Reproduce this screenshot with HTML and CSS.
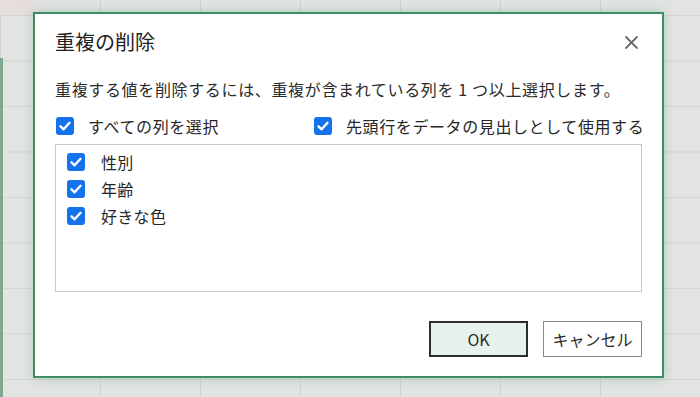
FILE: index.html
```html
<!DOCTYPE html>
<html lang="ja">
<head>
<meta charset="utf-8">
<title>重複の削除</title>
<link rel="stylesheet" href="styles.css">
</head>
<body>
<div class="sheet">
  <div class="corner"></div>
  <div class="selcol"></div>
  <div class="dialog">
    <div class="titlebar">
      <h1 class="title">重複の削除</h1>
      <button class="close" aria-label="閉じる">
        <svg width="13" height="13" viewBox="0 0 13 13"><path d="M1 1L12 12M12 1L1 12" stroke="#6b6b6b" stroke-width="1.8" stroke-linecap="round"/></svg>
      </button>
    </div>
    <p class="desc">重複する値を削除するには、重複が含まれている列を 1 つ以上選択します。</p>
    <div class="options">
      <label class="opt"><span class="cb"><svg viewBox="0 0 18 18"><path d="M4.5 9.3L7.6 12.3L13.5 5.8" fill="none" stroke="#fff" stroke-width="2.4" stroke-linecap="round" stroke-linejoin="round"/></svg></span>すべての列を選択</label>
      <label class="opt"><span class="cb"><svg viewBox="0 0 18 18"><path d="M4.5 9.3L7.6 12.3L13.5 5.8" fill="none" stroke="#fff" stroke-width="2.4" stroke-linecap="round" stroke-linejoin="round"/></svg></span>先頭行をデータの見出しとして使用する</label>
    </div>
    <div class="list">
      <label class="item"><span class="cb"><svg viewBox="0 0 18 18"><path d="M4.5 9.3L7.6 12.3L13.5 5.8" fill="none" stroke="#fff" stroke-width="2.4" stroke-linecap="round" stroke-linejoin="round"/></svg></span>性別</label>
      <label class="item"><span class="cb"><svg viewBox="0 0 18 18"><path d="M4.5 9.3L7.6 12.3L13.5 5.8" fill="none" stroke="#fff" stroke-width="2.4" stroke-linecap="round" stroke-linejoin="round"/></svg></span>年齢</label>
      <label class="item"><span class="cb"><svg viewBox="0 0 18 18"><path d="M4.5 9.3L7.6 12.3L13.5 5.8" fill="none" stroke="#fff" stroke-width="2.4" stroke-linecap="round" stroke-linejoin="round"/></svg></span>好きな色</label>
    </div>
    <div class="actions">
      <button class="btn primary">OK</button>
      <button class="btn">キャンセル</button>
    </div>
  </div>
</div>
</body>
</html>
```
FILE: styles.css
```css
* { box-sizing: border-box; }
html, body { margin: 0; padding: 0; }
body {
  width: 700px;
  height: 397px;
  overflow: hidden;
  font-family: "Noto Sans CJK JP", "Noto Sans", sans-serif;
  color: #262626;
}
.sheet {
  position: relative;
  width: 700px;
  height: 397px;
  background-color: #e2e4e2;
  background-image:
    linear-gradient(to right, #d3d5d3 1px, transparent 1px),
    linear-gradient(to bottom, #d3d5d3 1px, transparent 1px);
  background-size: 100px 100%, 100% 45.5px;
  background-position: 0 0, 0 15px;
}
.corner {
  position: absolute;
  left: 0; top: 0;
  width: 34px; height: 15px;
  background: #e6dedb;
}
.selcol {
  position: absolute;
  left: 0; top: 58px;
  width: 3px; height: 339px;
  background: #7fa88e;
}
.dialog {
  position: absolute;
  left: 33px; top: 12px;
  width: 631px; height: 366px;
  background: #fff;
  border: 2px solid #3f8d63;
  box-shadow: 0 0 10px rgba(70, 150, 105, 0.35);
  padding: 14px 20px 0 20px;
  display: flex;
  flex-direction: column;
}
.titlebar {
  display: flex;
  align-items: center;
  justify-content: space-between;
  height: 28px;
}
.title {
  margin: 0;
  font-size: 20px;
  font-weight: 400;
  line-height: 28px;
  color: #222;
}
.close {
  border: 0;
  background: none;
  padding: 0;
  margin-right: 4px;
  width: 13px; height: 13px;
  display: flex;
}
.desc {
  margin: 21px 0 0 0;
  font-size: 16px;
  line-height: 24px;
  letter-spacing: 0.65px;
  color: #2b2b2b;
}
.options {
  margin-top: 13px;
  display: grid;
  grid-template-columns: 258px 1fr;
  height: 24px;
}
.opt {
  display: flex;
  align-items: center;
  gap: 14px;
  font-size: 16px;
  line-height: 24px;
  letter-spacing: 0.6px;
  padding-left: 1px;
  white-space: nowrap;
}
.cb {
  width: 18px; height: 18px;
  flex: none;
  border-radius: 3px;
  background: #1472ec;
  display: flex;
}
.cb svg { width: 18px; height: 18px; }
.list {
  margin-top: 6px;
  height: 148px;
  border: 1px solid #c9c9c9;
  padding: 3px 11px;
  display: flex;
  flex-direction: column;
}
.item {
  display: flex;
  align-items: center;
  gap: 16px;
  height: 27px;
  font-size: 16px;
  letter-spacing: 0.3px;
}
.actions {
  margin-top: 29px;
  display: flex;
  justify-content: flex-end;
  gap: 15px;
}
.btn {
  width: 99px;
  height: 36px;
  font-family: inherit;
  font-size: 16px;
  color: #2b2b2b;
  background: #fff;
  border: 1px solid #8a8a8a;
  padding: 0;
}
.primary {
  background: #e8f2ec;
  border: 2px solid #2d2d2d;
}
```
